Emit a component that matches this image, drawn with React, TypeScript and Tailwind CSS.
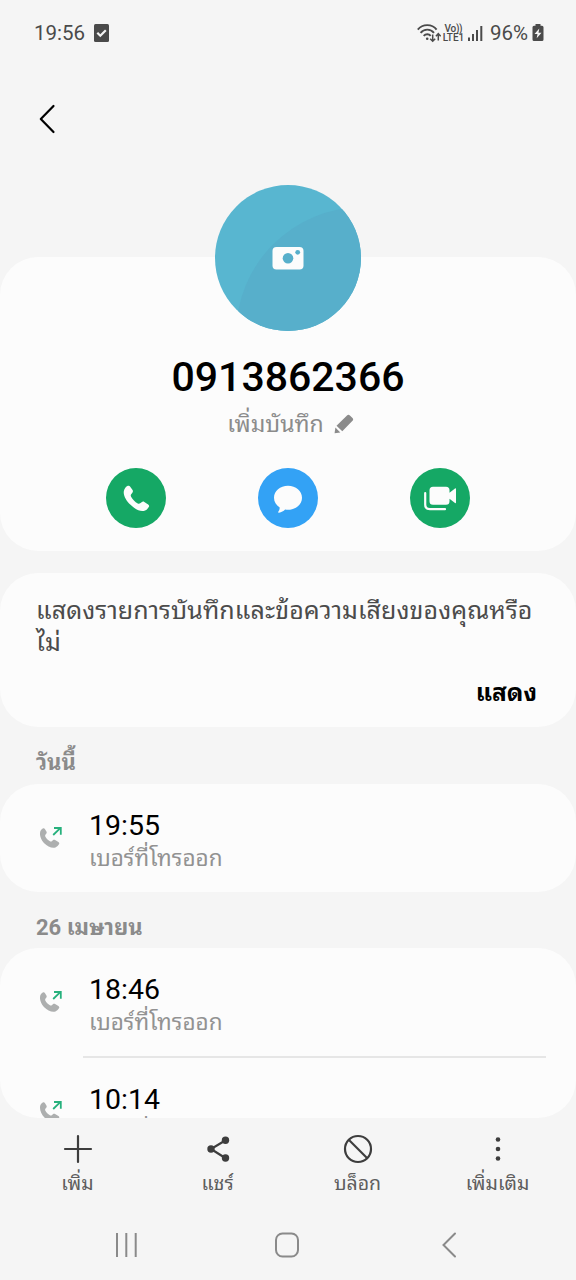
import React from "react";

type IconProps = { className?: string };

function HandsetIcon({ className }: IconProps) {
    return (
        <svg viewBox="0 0 28 28" className={className} fill="currentColor">
            <path d="M.9 6.200C1.500 3.700 3 1.900 5 .900c1-.5 1.900-.1 2.500.8l2.400 3.600c.6.9.5 1.900-.2 2.800L8.500 9.600c-.6.800-.6 1.600-.1 2.500 1.600 2.900 4 5.300 6.900 7 .9.5 1.700.5 2.500-.1l1.500-1.200c.9-.7 1.900-.8 2.800-.2l4 2.500c.9.600 1.300 1.500.8 2.500-1.100 2.200-3 3.800-5.400 4.300-4.200.8-9.500-2.100-13.700-6.300C3.300 16.200 0 10.400.9 6.200Z" />
        </svg>
    );
}

function OutgoingCallIcon() {
    return (
        <svg width="24" height="24" viewBox="0 0 24 24" fill="none" className="shrink-0">
            <path
                d="M1.200 5.800C1.600 4.300 2.500 3.100 3.900 2.400c.8-.4 1.500-.1 2 .6L7.400 5.500c.5.700.4 1.500-.2 2.200L6.400 8.700c-.4.600-.4 1.200-.1 1.900 1.100 2 2.600 3.600 4.600 4.700.7.400 1.300.4 1.900-.1l1.100-.9c.7-.6 1.500-.6 2.200-.2l3.300 2c.8.5 1.100 1.200.7 2-.8 1.500-2 2.700-3.700 3.300-3.500 1-8-.9-11.200-4.200C2.300 14.300.3 9.500 1.200 5.800Z"
                fill="#adafaf"
            />
            <path d="M14.200 9 21 2.400M15 2h6.800v6.800" stroke="#27b17d" strokeWidth="1.800" />
        </svg>
    );
}

function StatusBar() {
    return (
        <header className="flex h-[66px] shrink-0 items-center justify-between pl-[34px] pr-8 text-[#4a4a4a]">
            <div className="flex items-center gap-[9px]">
                <span className="text-[20.500px]">19:56</span>
                <svg width="15" height="18" viewBox="0 0 15 18">
                    <rect width="15" height="18" rx="1.500" fill="currentColor" />
                    <path d="m3.300 8.800 3 3L11.800 6.200" fill="none" stroke="#f5f5f5" strokeWidth="2.200" />
                </svg>
            </div>
            <div className="flex items-center">
                <svg width="24" height="20" viewBox="0 0 24 20" fill="none" stroke="currentColor" strokeWidth="1.900">
                    <path d="M.8 6.600C5.600.600 15 .600 19.600 6.600M3.600 9.800c3.400-4.200 10-4.200 13.400 0M6.700 12.900c2-2.300 5.200-2.300 7 0" />
                    <circle cx="10.200" cy="15.800" r="1.300" fill="currentColor" stroke="none" />
                    <path d="M15.700 11.500v7M13.200 15.800l2.500 2.500 2.500-2.500M21.300 17.500v-7M18.900 13.200l2.400-2.500 2.400 2.500" strokeWidth="1.500" />
                </svg>
                <div className="ml-[2px] flex w-[21px] flex-col items-center text-[10px] leading-[9px] font-medium">
                    <span className="tracking-[-0.300px]">Vo))</span>
                    <span>LTE1</span>
                </div>
                <svg width="15" height="17" viewBox="0 0 15 17" fill="currentColor" className="ml-[4px]">
                    <rect y="12.500" width="2" height="3.500" />
                    <rect x="4" y="9" width="2" height="7" />
                    <rect x="8" y="5" width="2" height="11" />
                    <rect x="12.300" y="1" width="2" height="15" />
                </svg>
                <span className="ml-[7px] text-[20.500px]">96%</span>
                <svg width="12" height="18" viewBox="0 0 12 18" className="ml-[4px]">
                    <path d="M3.500 0h5v1.800H10A1.500 1.500 0 0 1 11.500 3.300v12.200A1.500 1.500 0 0 1 10 17H2A1.500 1.500 0 0 1 .5 15.500V3.300A1.500 1.500 0 0 1 2 1.800h1.500Z" fill="currentColor" />
                    <path d="M7.300 4.500 2.500 10h3l-.8 4.300L9.500 8.800h-3Z" fill="#f5f5f5" />
                </svg>
            </div>
        </header>
    );
}

function ContactCard() {
    return (
        <section className="flex h-[294px] shrink-0 flex-col items-center rounded-[38px] bg-[#fcfcfc]">
            <div className="-mt-[72px] size-[146px] shrink-0">
                <svg viewBox="0 0 146 146">
                    <defs>
                        <clipPath id="avatar">
                            <circle cx="73" cy="73" r="73" />
                        </clipPath>
                    </defs>
                    <g clipPath="url(#avatar)">
                        <rect width="146" height="146" fill="#58b6d0" />
                        <circle cx="148" cy="149" r="127" fill="#57afcb" />
                    </g>
                    <rect x="57.500" y="62" width="31" height="22.500" rx="4" fill="#fcfcfc" />
                    <circle cx="73" cy="73.200" r="5.300" fill="#57afcb" />
                    <circle cx="82.700" cy="67.300" r="2.400" fill="#57afcb" />
                </svg>
            </div>
            <h1 className="mt-[22px] h-[48px] text-[41px] leading-[48px] font-medium text-black">0913862366</h1>
            <div className="mt-[4px] flex h-[40px] items-center gap-[10px] pl-[5px] text-[#8b8b8b]">
                <span className="text-[23px] leading-[40px]">เพิ่มบันทึก</span>
                <svg width="20" height="20" viewBox="0 0 20 20" fill="currentColor" className="-translate-y-px">
                    <path d="M2.500 11.700 13 1.400c.9-.9 2-.9 2.900 0l2.600 2.500c.9.900.9 2 0 2.900L8.300 17.200Z" />
                    <path d="m1.400 13.600 4.900 4.800L.6 19.300Z" />
                </svg>
            </div>
            <div className="mt-[23px] flex w-full justify-between px-[106px]">
                <button className="grid size-[60px] place-items-center rounded-full bg-[#15a865] text-[#fcfcfc]" aria-label="Call">
                    <HandsetIcon className="size-[27px]" />
                </button>
                <button className="grid size-[60px] place-items-center rounded-full bg-[#33a2f5] text-[#fcfcfc]" aria-label="Message">
                    <svg width="30" height="28" viewBox="0 0 30 28" fill="currentColor" className="translate-y-px">
                        <path d="M15 .800c7.900 0 14 5.200 14 12s-6.100 12-14 12c-1 0-2-.1-2.900-.3-1.600 1.700-3.700 2.900-6.100 3.200-.7.1-1-.5-.6-1.100.9-1.200 1.300-2.500 1.300-4.100C3.200 20.300 1 16.800 1 12.800c0-6.800 6.100-12 14-12Z" />
                    </svg>
                </button>
                <button className="grid size-[60px] place-items-center rounded-full bg-[#15a865] text-[#fcfcfc]" aria-label="Video call">
                    <svg width="32" height="25" viewBox="0 0 32 25" fill="currentColor">
                        <path d="M9 .800h13A3.500 3.500 0 0 1 25.500 4.300v2.500L31 2.500c.5-.4 1-.1 1 .5v13.500c0 .6-.5.9-1 .5l-5.500-4.200v2.500a3.500 3.500 0 0 1-3.500 3.500H9a3.500 3.500 0 0 1-3.500-3.500v-11A3.500 3.500 0 0 1 9 .800Z" />
                        <path d="M1.200 7v11.500c0 3 1.500 4.700 4.700 4.700H21" fill="none" stroke="currentColor" strokeWidth="2.200" strokeLinecap="round" />
                    </svg>
                </button>
            </div>
        </section>
    );
}

function CallRow({ time }: { time: string }) {
    return (
        <div className="flex h-[108px] shrink-0 pl-[39px]">
            <div className="mt-[42px] h-6 shrink-0">
                <OutgoingCallIcon />
            </div>
            <div className="ml-[26px] pt-[24px]">
                <div className="h-[35px] text-[28.500px] leading-[36px] text-black">{time}</div>
                <div className="h-[32px] text-[22.500px] leading-[31px] whitespace-nowrap text-[#929292]">เบอร์ที่โทรออก</div>
            </div>
        </div>
    );
}

function ActionButton({ label, children }: { label: string; children: React.ReactNode }) {
    return (
        <button className="flex w-[140px] flex-col items-center text-[#3d3d3d]">
            <svg width="32" height="32" viewBox="0 0 32 32" fill="none" stroke="currentColor" strokeWidth="2.200" strokeLinecap="round">
                {children}
            </svg>
            <span className="mt-[2px] h-[34px] text-[19.500px] leading-[34px] text-[#5e5e5e]">{label}</span>
        </button>
    );
}

export default function App() {
    return (
        <div className="flex h-[1280px] w-[576px] flex-col overflow-hidden bg-[#f5f5f5] font-[Roboto,'Noto_Sans_Thai_Looped',Loma,Waree,Garuda,'Droid_Sans_Thai','Noto_Sans_Thai','Noto_Sans',sans-serif]">
            <StatusBar />
            <div className="h-[191px] shrink-0 pt-[38px] pl-[38px]">
                <svg width="18" height="30" viewBox="0 0 18 30" fill="none" stroke="#000" strokeWidth="2.200" strokeLinecap="round" strokeLinejoin="round">
                    <path d="M15.500 2 2.800 15l12.700 13" />
                </svg>
            </div>
            <ContactCard />

            <section className="mt-[22px] flex h-[154px] shrink-0 flex-col rounded-[38px] bg-[#fcfcfc] px-9 pt-[22px]">
                <p className="text-[25px] leading-[32px] tracking-[0.100px] whitespace-nowrap text-[#4b4b4b]">
                    แสดงรายการบันทึกและข้อความเสียงของคุณหรือ
                    <br />
                    ไม่
                </p>
                <button className="mt-[16px] mr-[3px] h-[36px] self-end text-[24.500px] leading-[36px] font-bold text-black">แสดง</button>
            </section>

            <h2 className="h-[57px] shrink-0 pt-[18px] pl-9 text-[22px] leading-[36px] font-bold text-[#8b8b8b]">วันนี้</h2>
            <section className="h-[108px] shrink-0 rounded-[38px] bg-[#fcfcfc]">
                <CallRow time="19:55" />
            </section>

            <h2 className="h-[56px] shrink-0 pt-[18px] pl-9 text-[22px] leading-[36px] font-bold text-[#8b8b8b]">26 เมษายน</h2>
            <section className="h-[170px] shrink-0 overflow-hidden rounded-[38px] bg-[#fcfcfc]">
                <CallRow time="18:46" />
                <div className="mr-[30px] ml-[83px] h-[2px] bg-[#e6e6e6]" />
                <CallRow time="10:14" />
            </section>

            <div className="flex h-[92px] shrink-0 justify-center pt-[15px] pr-[1px]">
                <ActionButton label="เพิ่ม">
                    <path d="M16 3v26M3 16h26" />
                </ActionButton>
                <ActionButton label="แชร์">
                    <path d="M24 7 9 16l15 9.500" />
                    <g fill="currentColor" stroke="none">
                        <circle cx="23.500" cy="7.200" r="3.700" />
                        <circle cx="9" cy="16" r="3.700" />
                        <circle cx="23.500" cy="25" r="3.700" />
                    </g>
                </ActionButton>
                <ActionButton label="บล็อก">
                    <circle cx="16" cy="16" r="13" />
                    <path d="m7 7 18 18" />
                </ActionButton>
                <ActionButton label="เพิ่มเติม">
                    <g fill="currentColor" stroke="none">
                        <circle cx="16" cy="6.500" r="2.300" />
                        <circle cx="16" cy="16" r="2.300" />
                        <circle cx="16" cy="25.500" r="2.300" />
                    </g>
                </ActionButton>
            </div>

            <nav className="flex h-[70px] shrink-0 items-center pl-[114px] text-[#8a8a8a]">
                <svg width="24" height="24" viewBox="0 0 24 24" stroke="currentColor" strokeWidth="2">
                    <path d="M3 0v24M12.300 0v24M21.700 0v24" />
                </svg>
                <svg width="24" height="26" viewBox="0 0 24 26" fill="none" stroke="currentColor" strokeWidth="2" className="ml-[137px]">
                    <rect x="1" y="1.500" width="22" height="23" rx="6.500" />
                </svg>
                <svg width="16" height="26" viewBox="0 0 16 26" fill="none" stroke="currentColor" strokeWidth="2" strokeLinecap="round" className="ml-[142px]">
                    <path d="M14 1.500 2.500 13 14 24.500" />
                </svg>
            </nav>
        </div>
    );
}
